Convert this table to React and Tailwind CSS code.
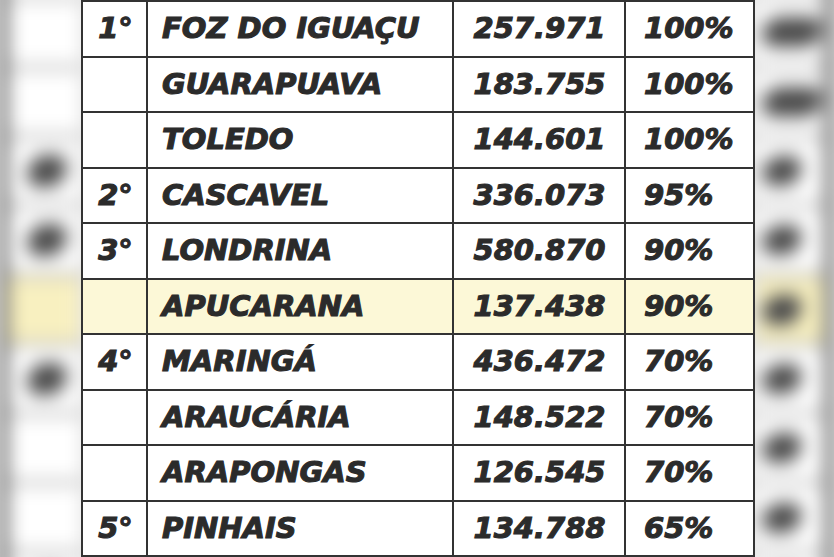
import React from "react";

const rows = [
  ["1°", "FOZ DO IGUAÇU", "257.971", "100%"],
  ["", "GUARAPUAVA", "183.755", "100%"],
  ["", "TOLEDO", "144.601", "100%"],
  ["2°", "CASCAVEL", "336.073", "95%"],
  ["3°", "LONDRINA", "580.870", "90%"],
  ["", "APUCARANA", "137.438", "90%", true],
  ["4°", "MARINGÁ", "436.472", "70%"],
  ["", "ARAUCÁRIA", "148.522", "70%"],
  ["", "ARAPONGAS", "126.545", "70%"],
  ["5°", "PINHAIS", "134.788", "65%"],
];

const font = "font-['DejaVu_Sans',sans-serif] font-bold italic text-[29px] leading-none text-[#2b2b2b] [-webkit-text-stroke:1.1px_#2b2b2b]";

function LeftStrip() {
  return (
    <div className="w-[81px] h-full overflow-hidden bg-[#e2e2e2] shrink-0">
      <div className="-mt-[69px] blur-[9px] flex flex-col border-l-[8px] border-[#555]">
        {rows.map((r, i) => (
          <div
            key={i}
            className={`h-[69.3px] shrink-0 flex items-center border-b-[5px] border-[#b0b0b0] ${r[4] ? "bg-[#f8f0c0]" : "bg-white"}`}
          >
            {r[0] ? <div className="ml-[20px] w-[38px] h-[32px] rounded-[14px] bg-[#4a4a4a] -skew-x-12" /> : null}
          </div>
        ))}
      </div>
    </div>
  );
}

function RightStrip() {
  return (
    <div className="w-[79px] h-full overflow-hidden bg-[#e6e6e6] shrink-0">
      <div className="-mt-[69px] blur-[9px] flex flex-col border-r-[10px] border-[#707070]">
        {rows.map((r, i) => (
          <div
            key={i}
            className={`h-[69.3px] shrink-0 flex items-center border-b-[5px] border-[#b0b0b0] ${r[4] ? "bg-[#f8f0c0]" : "bg-white"}`}
          >
            <div
              className={`ml-[8px] h-[30px] rounded-[14px] bg-[#4a4a4a] -skew-x-12 ${r[3] === "100%" ? "w-[58px]" : "w-[38px]"}`}
            />
          </div>
        ))}
      </div>
    </div>
  );
}

export default function App() {
  return (
    <div className="w-[834px] h-[557px] flex overflow-hidden bg-[#e6e6e6]">
      <LeftStrip />
      <div className="w-[674px] h-[557px] shrink-0 grid grid-cols-[63px_304px_170px_127px] grid-rows-10 gap-[2px] p-[2px] bg-[#333333]">
        {rows.map((r, i) => {
          const bg = r[4] ? "bg-[#fcf8d7]" : "bg-white";
          return (
            <React.Fragment key={i}>
              <div className={`${bg} flex items-center justify-center pl-[2px] ${font}`}>{r[0]}</div>
              <div className={`${bg} flex items-center pl-[14px] ${font}`}>{r[1]}</div>
              <div className={`${bg} flex items-center justify-center pl-[1px] ${font}`}>{r[2]}</div>
              <div className={`${bg} flex items-center pl-[18px] ${font}`}>{r[3]}</div>
            </React.Fragment>
          );
        })}
      </div>
      <RightStrip />
    </div>
  );
}
